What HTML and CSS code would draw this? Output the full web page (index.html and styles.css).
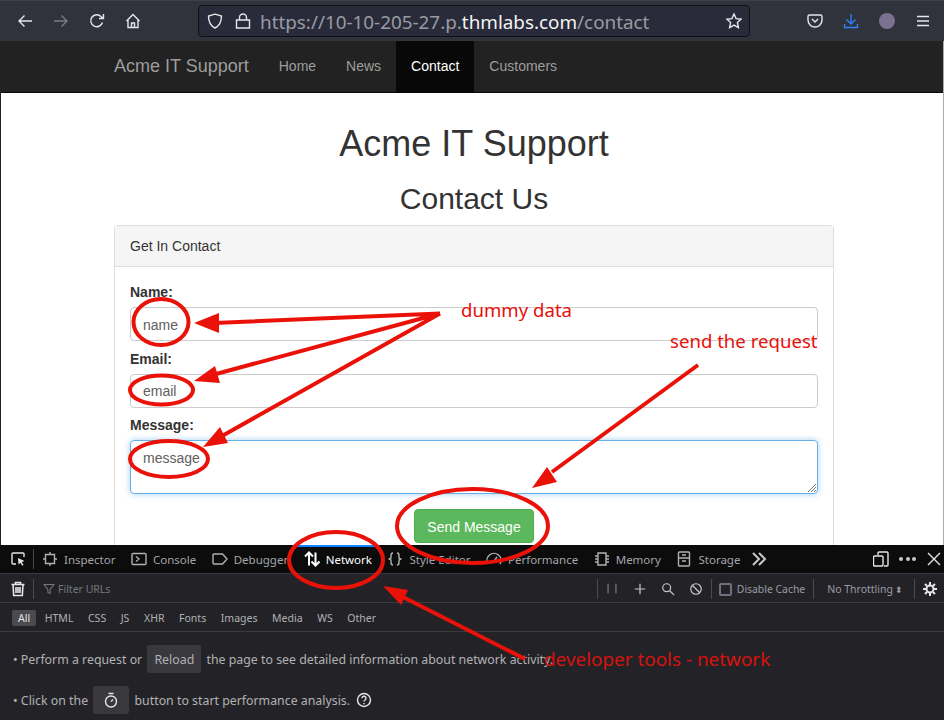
FILE: index.html
```html
<!DOCTYPE html>
<html lang="en">

<head>
  <meta charset="UTF-8">
  <meta name="viewport" content="width=device-width, initial-scale=1.0">
  <title>Contact</title>
  <link rel="stylesheet" href="styles.css">
</head>
<body>
  <!-- Browser toolbar -->
  <div class="browser-bar">
    <div class="nav-icons">
      <svg class="icon" viewBox="0 0 16 16"><path d="M15 8H2M7.500 2.500 2 8l5.500 5.500"/></svg>
      <svg class="icon dim" viewBox="0 0 16 16"><path d="M1 8h13M8.500 2.500 14 8l-5.500 5.500"/></svg>
      <svg class="icon" viewBox="0 0 16 16"><path d="M13.500 9.500A6 6 0 1 1 12 3.500l2 2M14.500 1v4.500H10"/></svg>
      <svg class="icon" viewBox="0 0 16 16"><path d="M1.500 8 8 1.500 14.500 8M3 7v7.500h10V7M6.500 14.500V10h3v4.500"/></svg>
    </div>
    <div class="url-box">
      <svg class="icon" viewBox="0 0 16 16"><path d="M8 1.200 14.500 3c0 6-1.500 9.500-6.500 12C3 12.500 1.500 9 1.500 3z"/></svg>
      <svg class="icon" viewBox="0 0 16 16"><path d="M1.500 7h13v8h-13zM4.500 7V4.500a3.500 3.500 0 0 1 7 0V7"/></svg>
      <span class="url"><span class="url-dim">https://10-10-205-27.p.</span>thmlabs.com<span class="url-dim">/contact</span></span>
      <svg class="icon star" viewBox="0 0 16 16"><path d="M8 1l2.100 4.600 5 .6-3.700 3.400 1 5L8 12.100l-4.400 2.500 1-5L.9 6.200l5-.6z"/></svg>
    </div>
    <div class="bar-icons">
      <svg class="icon" viewBox="0 0 16 16"><path d="M2.500 2h11A1.500 1.500 0 0 1 15 3.500V7A7 7 0 0 1 1 7V3.500A1.500 1.500 0 0 1 2.500 2zM5 6l3 3 3-3"/></svg>
      <svg class="icon blue" viewBox="0 0 16 16"><path d="M8 1v9.500M3.500 6.500 8 11l4.500-4.500M1.500 11v3.500h13V11"/></svg>
      <span class="avatar"></span>
      <svg class="icon" viewBox="0 0 16 16"><path d="M2 3.500h12M2 8h12M2 12.500h12"/></svg>
    </div>
  </div>

  <!-- Page -->
  <div class="page">
    <div class="site-nav">
      <span class="brand">Acme IT Support</span>
      <a class="nav-link">Home</a>
      <a class="nav-link">News</a>
      <a class="nav-link active">Contact</a>
      <a class="nav-link">Customers</a>
    </div>
    <div class="content">
      <h1>Acme IT Support</h1>
      <h2>Contact Us</h2>
      <div class="panel">
        <div class="panel-heading">Get In Contact</div>
        <div class="panel-body">
          <label>Name:</label>
          <div class="field first">name</div>
          <label>Email:</label>
          <div class="field second">email</div>
          <label>Message:</label>
          <div class="field area">message
            <svg class="grip" viewBox="0 0 10 10"><path d="M9 1 1 9M9 4 4 9M9 7 7 9"/></svg>
          </div>
          <div class="send-row"><span class="send-btn">Send Message</span></div>
        </div>
      </div>
    </div>
  </div>

  <!-- Devtools -->
  <div class="devtools">
    <div class="tabs">
      <svg class="icon picker" viewBox="0 0 16 16"><path d="M14 6V3a1 1 0 0 0-1-1H3a1 1 0 0 0-1 1v9a1 1 0 0 0 1 1h3"/><path class="solid" d="M8 7l6.500 3-2.700 1 1.700 3-1.300.7-1.700-3L8.500 13.500z"/></svg>
      <span class="sep tall"></span>
      <span class="tab"><svg class="icon" viewBox="0 0 16 16"><path d="M3.500 3.500h9v9h-9zM8 1v2.500M8 12.500V15M1 8h2.500M12.500 8H15"/></svg>Inspector</span>
      <span class="tab"><svg class="icon" viewBox="0 0 16 16"><path d="M2 2.500h12a1 1 0 0 1 1 1v9a1 1 0 0 1-1 1H2a1 1 0 0 1-1-1v-9a1 1 0 0 1 1-1zM5 5.500 8 8l-3 2.500"/></svg>Console</span>
      <span class="tab"><svg class="icon" viewBox="0 0 16 16"><path d="M2 3h8.500L15 8l-4.500 5H2a1 1 0 0 1-1-1V4a1 1 0 0 1 1-1z"/></svg>Debugger</span>
      <span class="tab selected"><svg class="icon" viewBox="0 0 16 16"><path d="M5 14.500V1.500M1 5.500l4-4 4 4M11.500 1.500v13M7.500 10.500l4 4 4-4"/></svg>Network</span>
      <span class="tab"><svg class="icon" viewBox="0 0 16 16"><path d="M6 2C4 2 4 3 4 4.500v2C4 7.500 3 8 1.500 8 3 8 4 8.500 4 9.500v2C4 13 4 14 6 14M10 2c2 0 2 1 2 2.500v2c0 1 1 1.500 2.500 1.500-1.500 0-2.500.5-2.500 1.500v2c0 1.500 0 2.500-2 2.500"/></svg>Style Editor</span>
      <span class="tab"><svg class="icon" viewBox="0 0 16 16"><path d="M2 13A7 7 0 1 1 14 13M8 10l3-4"/></svg>Performance</span>
      <span class="tab"><svg class="icon" viewBox="0 0 16 16"><path d="M4 2h8v12H4zM4 5H1M4 8H1M4 11H1M12 5h3M12 8h3M12 11h3"/></svg>Memory</span>
      <span class="tab"><svg class="icon" viewBox="0 0 16 16"><path d="M3.500 1h9a1 1 0 0 1 1 1v12a1 1 0 0 1-1 1h-9a1 1 0 0 1-1-1V2a1 1 0 0 1 1-1zM2.500 7h11M6 4h4M6 10h4"/></svg>Storage</span>
      <svg class="icon chevrons" viewBox="0 0 16 16"><path d="M2 2l6 6-6 6M8 2l6 6-6 6"/></svg>
      <div class="tab-right">
        <svg class="icon" viewBox="0 0 16 16"><path d="M5 4V2a1 1 0 0 1 1-1h8a1 1 0 0 1 1 1v12a1 1 0 0 1-1 1h-3M1.500 5H9a1 1 0 0 1 1 1v8a1 1 0 0 1-1 1H1.500a1 1 0 0 1-1-1V6a1 1 0 0 1 1-1z"/></svg>
        <span class="dots"><i></i><i></i><i></i></span>
        <svg class="icon" viewBox="0 0 16 16"><path d="M2 2l12 12M14 2 2 14"/></svg>
      </div>
    </div>
    <div class="filter-bar">
      <svg class="icon trash" viewBox="0 0 16 16"><path d="M1.500 3.500h13M5.500 3.500V1.500h5v2M3 3.500l.7 11h8.600l.7-11M6 6v6M8 6v6M10 6v6"/></svg>
      <span class="sep"></span>
      <svg class="icon funnel" viewBox="0 0 16 16"><path d="M1.500 2h13L9.500 8.500V14l-3-1.500v-4z"/></svg>
      <span class="filter-text">Filter URLs</span>
      <div class="filter-right">
        <span class="sep"></span>
        <svg class="icon small pause" viewBox="0 0 16 16"><path d="M3.500 2v11M12.500 2v11"/></svg>
        <svg class="icon small" viewBox="0 0 16 16"><path d="M8 2v12M2 8h12"/></svg>
        <svg class="icon small" viewBox="0 0 16 16"><circle cx="6.500" cy="6.500" r="4.500"/><path d="M10 10l5 5"/></svg>
        <svg class="icon small" viewBox="0 0 16 16"><circle cx="8" cy="8" r="6"/><path d="M4 4l8 8"/></svg>
        <span class="sep"></span>
        <span class="check-box"></span>
        <span class="filter-label cache">Disable Cache</span>
        <span class="sep"></span>
        <span class="filter-label throttle">No Throttling<span class="updown">⬍</span></span>
        <span class="sep"></span>
        <svg class="icon gear" viewBox="0 0 16 16"><circle cx="8" cy="8" r="3.500"/><path d="M8 1v3M8 12v3M1 8h3M12 8h3M3 3l2 2M11 11l2 2M13 3l-2 2M5 11l-2 2"/></svg>
      </div>
    </div>
    <div class="type-bar">
      <span class="type on">All</span>
      <span class="type">HTML</span>
      <span class="type">CSS</span>
      <span class="type">JS</span>
      <span class="type">XHR</span>
      <span class="type">Fonts</span>
      <span class="type">Images</span>
      <span class="type">Media</span>
      <span class="type">WS</span>
      <span class="type">Other</span>
    </div>
    <div class="notice">
      <p>• Perform a request or <span class="notice-btn">Reload</span> the page to see detailed information about network activity.</p>
      <p>• Click on the <span class="notice-btn"><svg class="icon" viewBox="0 0 16 16"><circle cx="8" cy="9.500" r="5.500"/><path d="M5.500 1.500h5M8 9.500l2-2"/></svg></span> button to start performance analysis. <svg class="icon help" viewBox="0 0 16 16"><circle cx="8" cy="8" r="6.500"/><path d="M6 6.300a2 2 0 1 1 3 1.700c-.7.400-1 .8-1 1.500M8 11v1.200"/></svg></p>
    </div>
  </div>

  <!-- Annotations drawn on top of the screenshot -->
  <svg class="marks" viewBox="0 0 944 720">
    <g class="mark-lines">
      <ellipse cx="161" cy="322" rx="27.500" ry="23"/>
      <ellipse cx="161.500" cy="390" rx="31.500" ry="14.500"/>
      <ellipse cx="169" cy="459" rx="39" ry="18"/>
      <ellipse cx="472.500" cy="526" rx="75.500" ry="37"/>
      <ellipse cx="336" cy="560" rx="47" ry="28"/>
      <path d="M440 313.500 215 323M440 313.500 216 374M440 313.500 222 436M698 365 552 472M525 659 403 597"/>
    </g>
    <g class="mark-heads">
      <path d="M194 323 219 313 219 333z"/>
      <path d="M194 381 215 366 220 383z"/>
      <path d="M203 447 220 427 228 443z"/>
      <path d="M532 488 547 467 557 482z"/>
      <path d="M383 586 408 590 401 605z"/>
    </g>
  </svg>
  <span class="note note-data">dummy data</span>
  <span class="note note-send">send the request</span>
  <span class="note note-dev">developer tools - network</span>
</body>

</html>
```

FILE: styles.css
```css
html,
body {
  margin: 0;
  padding: 0;
}

body {
  position: relative;
  width: 944px;
  height: 720px;
  overflow: hidden;
  font-family: "Liberation Sans", Arial, sans-serif;
  background: #232327;
}

.icon {
  width: 16px;
  height: 16px;
  flex: none;
  fill: none;
  stroke: #e6e6ea;
  stroke-width: 1.4;
}

/* Browser toolbar */
.browser-bar {
  display: flex;
  align-items: center;
  height: 40px;
  background: #31333c;
  border-top: 1px solid #3e4048;
  border-bottom: 1px solid #0c0c0d;
  margin-bottom: -1px;
}

.nav-icons {
  display: flex;
  gap: 20px;
  padding-left: 17px;
  width: 198px;
  box-sizing: border-box;
}

.dim {
  stroke: #7b7d83;
}

.url-box {
  display: flex;
  align-items: center;
  gap: 12px;
  width: 552px;
  height: 32px;
  box-sizing: border-box;
  padding: 0 7px 0 8px;
  background: #292b3a;
  border: 1px solid #101014;
  border-radius: 4px;
}

.url {
  flex: 1;
  margin: 1px 0 0 -3px;
  font-family: "Noto Sans", sans-serif;
  font-size: 18.850px;
  color: #f4f4f6;
  white-space: nowrap;
}

.url-dim {
  color: #9a9ba2;
}

.bar-icons {
  display: flex;
  align-items: center;
  gap: 20px;
  margin-left: 57px;
}

.blue {
  stroke: #2f80f5;
}

.avatar {
  width: 16px;
  height: 16px;
  border-radius: 50%;
  background: #7b7190;
}

/* Page */
.page {
  height: 504px;
  overflow: hidden;
  background: #fff;
  color: #333;
  border-left: 1px solid #222;
  border-right: 1px solid #aaa;
}

.site-nav {
  display: flex;
  align-items: stretch;
  height: 51px;
  padding-left: 98px;
  background: #222;
  border-bottom: 1px solid #080808;
}

.brand {
  font-size: 18px;
  line-height: 50px;
  padding: 0 15px;
  color: #9d9d9d;
}

.nav-link {
  font-size: 14px;
  line-height: 50px;
  padding: 0 15px;
  color: #9d9d9d;
}

.nav-link.active {
  color: #fff;
  background: #080808;
}

.content {
  padding-left: 4px;
  text-align: center;
}

h1 {
  margin: 31px 0 0;
  font-size: 36px;
  line-height: 40px;
  font-weight: 400;
}

h2 {
  margin: 18px 0 0;
  font-size: 30px;
  line-height: 33px;
  font-weight: 400;
}

.panel {
  width: 720px;
  box-sizing: border-box;
  margin: 10px auto 0;
  text-align: left;
  border: 1px solid #ddd;
  border-radius: 4px;
}

.panel-heading {
  height: 41px;
  box-sizing: border-box;
  padding: 10px 15px;
  font-size: 14px;
  line-height: 20px;
  background: #f5f5f5;
  border-bottom: 1px solid #ddd;
}

.panel-body {
  padding: 15px;
  height: 300px;
}

label {
  display: block;
  font-size: 14px;
  line-height: 20px;
  font-weight: 700;
  margin-bottom: 5px;
}

.field {
  height: 34px;
  box-sizing: border-box;
  margin-bottom: 7px;
  padding: 7px 12px 5px;
  font-size: 14px;
  line-height: 20px;
  color: #606060;
  border: 1px solid #ccc;
  border-radius: 4px;
}

.field.first {
  margin-bottom: 8px;
}

.field.second {
  padding-top: 6px;
}

.field.area {
  position: relative;
  height: 54px;
  margin-bottom: 15px;
  border-color: #66afe9;
  box-shadow: 0 0 6px rgba(102, 175, 233, .6);
}

.grip {
  position: absolute;
  right: 0;
  bottom: 0;
  width: 10px;
  height: 10px;
  fill: none;
  stroke: #777;
  stroke-width: 1;
}

.send-row {
  text-align: center;
}

.send-btn {
  display: inline-block;
  padding: 7px 12px 5px;
  font-size: 14px;
  line-height: 20px;
  color: #fff;
  background: #5cb85c;
  border: 1px solid #4cae4c;
  border-radius: 4px;
}

/* Devtools */
.devtools {
  font-family: "Noto Sans", sans-serif;
  color: #b1b1b3;
  background: #232327;
}

.tabs {
  display: flex;
  align-items: center;
  height: 28px;
  background: #0c0c0d;
  border-bottom: 1px solid #3a3a40;
  font-size: 11.500px;
}

.picker {
  margin-left: 10px;
}

.solid {
  fill: #e6e6ea;
  stroke: none;
}

.sep {
  width: 1px;
  height: 20px;
  flex: none;
  background: #4a4a4f;
}

.sep.tall {
  margin: 0 8px 0 7px;
}

.tab {
  display: flex;
  align-items: center;
  gap: 6px;
  height: 100%;
  margin-right: 15.500px;
  color: #a5a5a8;
  white-space: nowrap;
}

.tab .icon {
  stroke: #b1b1b3;
}

.tab.selected {
  color: #fff;
  box-shadow: inset 0 2px 0 #0a84ff;
  padding: 0 7px 0 9px;
  margin: 0 8.500px 0 -9px;
}

.tab.selected .icon {
  stroke: #fff;
  stroke-width: 2;
}

.chevrons {
  margin-left: -4.500px;
  stroke: #c8c8cb;
  stroke-width: 2;
}

.tab-right {
  display: flex;
  align-items: center;
  gap: 10px;
  margin-left: auto;
  padding-right: 2px;
}

.dots {
  display: flex;
  gap: 2.500px;
}

.dots i {
  width: 4px;
  height: 4px;
  border-radius: 50%;
  background: #c8c8cb;
}

.filter-bar {
  display: flex;
  align-items: center;
  height: 26px;
  padding-top: 2px;
  border-bottom: 1px solid #3a3a40;
  font-size: 10.500px;
}

.trash {
  margin: 0 7px 0 10px;
  stroke-width: 1.600;
}

.funnel {
  width: 12px;
  height: 12px;
  margin: 0 3px 0 9px;
  stroke: #77777c;
}

.filter-text {
  color: #77777c;
}

.filter-right {
  display: flex;
  align-items: center;
  margin-left: auto;
  height: 100%;
}

.small {
  width: 14px;
  height: 14px;
  margin-left: 14px;
  stroke: #c8c8cb;
}

.pause {
  margin-left: 7px;
  stroke: #9a9ba2;
  stroke-width: 1;
}

.filter-right .sep {
  margin-left: 8px;
}

.check-box {
  width: 9px;
  height: 9px;
  margin: 0 5px 0 7px;
  border: 2px solid #6f6f80;
  border-radius: 2px;
}

.filter-label {
  color: #9a9ba2;
}

.cache {
  font-size: 10.400px;
}

.throttle {
  margin: 0 3px 0 13px;
}

.updown {
  font-size: 9px;
  margin-left: 2px;
}

.gear {
  margin: 0 6px 0 7px;
  stroke-width: 2;
}

.type-bar {
  display: flex;
  align-items: center;
  gap: 2.600px;
  height: 26px;
  padding: 2px 0 0 12px;
  border-bottom: 1px solid #3a3a40;
  font-size: 10.500px;
}

.type {
  padding: 1px 6px;
  border-radius: 2px;
  color: #b1b1b3;
}

.type.on {
  background: #4a4a4f;
  color: #e4e4e6;
}

.notice {
  padding-left: 13px;
  font-size: 12.350px;
  color: #b1b1b3;
}

.notice p {
  display: flex;
  align-items: center;
  gap: 2px;
  height: 28px;
  margin: 13px 0 0;
  white-space: pre;
}

.notice-btn {
  display: inline-flex;
  align-items: center;
  justify-content: center;
  min-width: 36px;
  height: 28px;
  padding: 0 7px;
  box-sizing: border-box;
  background: #38383d;
  border-radius: 2px;
}

.help {
  margin-left: 1px;
}

/* Annotations */
.marks {
  position: absolute;
  top: 0;
  left: 0;
  width: 944px;
  height: 720px;
  pointer-events: none;
}

.mark-lines {
  fill: none;
  stroke: #ea1208;
  stroke-width: 4;
}

.mark-heads {
  fill: #ea1208;
}

.note {
  position: absolute;
  font-family: "Noto Sans", sans-serif;
  font-size: 18.600px;
  color: #e8100a;
  white-space: nowrap;
}

.note-data {
  left: 461px;
  top: 297px;
}

.note-send {
  left: 670px;
  top: 328px;
}

.note-dev {
  left: 544px;
  top: 646px;
  font-size: 18.900px;
  color: #d8120e;
}
```
